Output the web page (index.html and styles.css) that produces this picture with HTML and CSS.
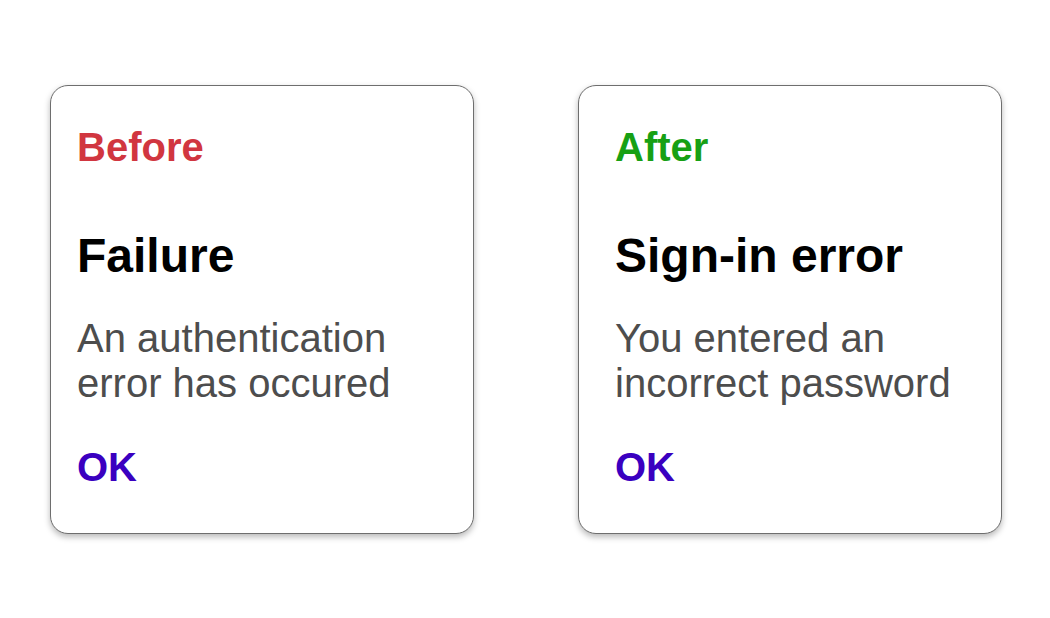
FILE: index.html
```html
<!DOCTYPE html>
<html lang="en">
<head>
<meta charset="utf-8">
<title>Before / After</title>
<link rel="stylesheet" href="styles.css">
</head>
<body>
<main class="compare">
  <section class="card card--before">
    <div class="tag tag--before">Before</div>
    <h2 class="title">Failure</h2>
    <p class="message">An authentication error has occured</p>
    <div class="action">OK</div>
  </section>
  <section class="card card--after">
    <div class="tag tag--after">After</div>
    <h2 class="title">Sign-in error</h2>
    <p class="message">You entered an incorrect password</p>
    <div class="action">OK</div>
  </section>
</main>
</body>
</html>
```
FILE: styles.css
```css
html, body {
  margin: 0;
  padding: 0;
  background: #ffffff;
}
body {
  font-family: "Liberation Sans", Arial, sans-serif;
  width: 1050px;
  height: 618px;
  overflow: hidden;
}
.compare {
  display: flex;
  gap: 104px;
  padding: 85px 0 0 50px;
}
.card {
  box-sizing: border-box;
  width: 424px;
  height: 449px;
  border: 1px solid #6e6e6e;
  border-radius: 18px;
  background: #fff;
  box-shadow: 0 3px 6px rgba(0, 0, 0, 0.28);
  padding-top: 38px;
  display: flex;
  flex-direction: column;
}
.card--before { padding-left: 26px; }
.card--after { padding-left: 36px; }
.tag {
  font-size: 40px;
  line-height: 46px;
  font-weight: bold;
}
.tag--before { color: #d13640; }
.tag--after { color: #17a014; }
.title {
  margin: 58px 0 0;
  font-size: 48px;
  line-height: 56px;
  font-weight: bold;
  color: #000;
}
.message {
  margin: 32px 0 0;
  font-size: 40px;
  line-height: 45px;
  color: #4d4d4d;
  max-width: 340px;
}
.action {
  margin-top: 38px;
  font-size: 40px;
  line-height: 46px;
  font-weight: bold;
  color: #3a00c0;
}
```
